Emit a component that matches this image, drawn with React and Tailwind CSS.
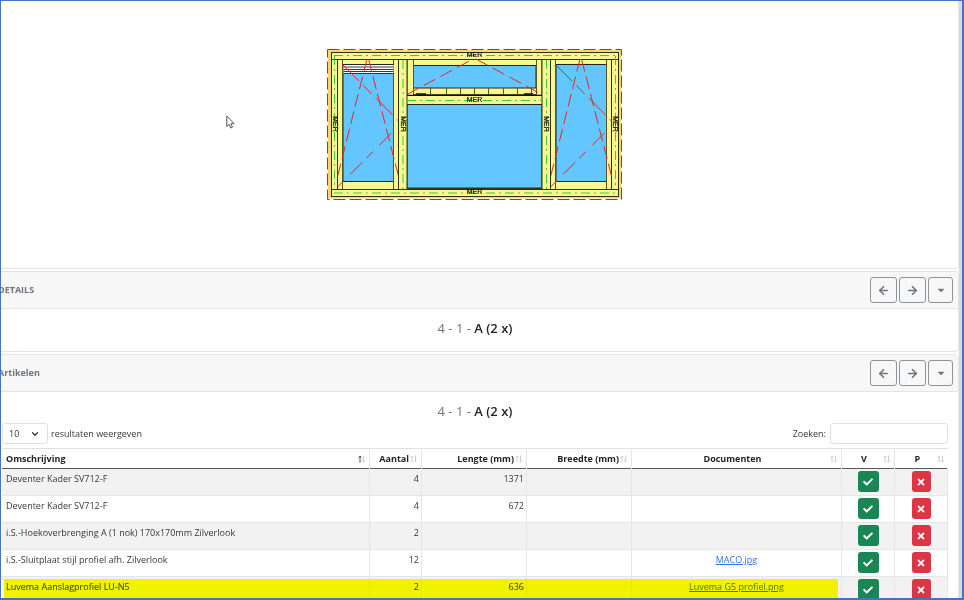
import React, { useState } from "react";
import { ArrowLeft, ArrowRight, ChevronDown } from "lucide-react";
import { FaCaretDown, FaCheck, FaTimes } from "react-icons/fa";

const articles = [
  { id: 1, name: "Deventer Kader SV712-F", count: 4, length: 1371 },
  { id: 2, name: "Deventer Kader SV712-F", count: 4, length: 672 },
  { id: 3, name: "i.S.-Hoekoverbrenging A (1 nok) 170x170mm Zilverlook", count: 2 },
  { id: 4, name: "i.S.-Sluitplaat stijl profiel afh. Zilverlook", count: 12, doc: "MACO.jpg" },
  { id: 5, name: "Luvema Aanslagprofiel LU-N5", count: 2, length: 636, doc: "Luvema G5 profiel.png", marked: true },
];

const columns = [
  { label: "Omschrijving", align: "text-left", sorted: true },
  { label: "Aantal", align: "text-right" },
  { label: "Lengte (mm)", align: "text-right" },
  { label: "Breedte (mm)", align: "text-right" },
  { label: "Documenten", align: "text-center" },
  { label: "V", align: "text-center" },
  { label: "P", align: "text-center" },
];

// Draai-kiep raam, x = linkerkant van het vleugelkader
const Sash = ({ x, louver }) => (
  <g>
    <rect x={x} y="59.5" width="61" height="130" fill="#f8f791" stroke="#33330f" />
    <rect x={x + 5.5} y="64.5" width="50.5" height="117" fill="#64c6ff" stroke="#222" />
    <path d={`M${x + 5} 60V189M${x + 56} 60V189`} stroke="#55552a" />
    {louver && (
      <>
        <rect x={x + 6} y="65" width="50" height="8.5" fill="#fff" />
        <path d={`M${x + 6} 64.5h50m-50 2.5h50m-50 2.5h50m-50 2h50m-50 2h50`} stroke="#222" strokeWidth="0.9" />
      </>
    )}
    <g stroke="#e2262c" strokeDasharray="13 5">
      <path d={`M${x + 29.5} 59L${x} 177`} />
      <path d={`M${x + 31} 59L${x + 61} 176`} />
      <path d={`M${x + 4.5} 64L${x + 61} 121`} strokeDasharray="24 6 12 6" />
      <path d={`M${x} 187L${x + 56} 131`} strokeDasharray="9 9 17 6" />
    </g>
  </g>
);

const WindowDrawing = () => (
  <svg width="297" height="152" viewBox="327 49 297 152" fill="none" role="img" aria-label="Kozijn">
    <rect x="328" y="50" width="293" height="148.5" fill="#ffd470" />
    <rect x="327.5" y="49.5" width="294" height="150" stroke="#4a46c8" strokeDasharray="12 4" />
    <rect x="331.5" y="52.5" width="287" height="144" fill="#f8f791" stroke="#33330f" />
    <path d="M331.5 59.5h287M331.5 189.5h287" stroke="#33330f" />

    <Sash x={337.5} louver />
    <Sash x={550.5} />

    {/* Middenvak */}
    <rect x="407" y="59.5" width="135" height="36" fill="#f8f791" stroke="#33330f" />
    <rect x="413.5" y="65.5" width="122.5" height="22.5" fill="#64c6ff" stroke="#222" />
    <path d="M413.5 60V95M536.5 60V95" stroke="#55552a" />
    <path d="M430.5 88v7M446.5 88v7M460.5 88v7M474.5 88v7M488.5 88v7M503.5 88v7M517.5 88v7M531.5 88v7M413.5 94.5h123" stroke="#55552a" />
    <path d="M416 94h10M524 94h9" stroke="#111" strokeWidth="1.6" />
    <path d="M407 95.5h135" stroke="#111" strokeWidth="1.5" />
    <rect x="407" y="96" width="135" height="8" fill="#f8f791" />
    <rect x="407" y="104.5" width="135" height="84" fill="#64c6ff" stroke="#222" />
    <path d="M407 188.5h135" stroke="#33330f" strokeWidth="2" />
    <path d="M407 94.5L473 59M476 59L542 94.5" stroke="#e2262c" strokeDasharray="13 6" />

    {/* Stijlen */}
    <rect x="398.5" y="59.5" width="8.5" height="130" fill="#f8f791" stroke="#33330f" />
    <rect x="542" y="59.5" width="8.5" height="130" fill="#f8f791" stroke="#33330f" />

    <g stroke="#35cf35" strokeDasharray="9 4 2 4">
      <path d="M334 55.5H616M407 100.5H541M334 193H616" />
      <path d="M334.5 56V189M403 60V189M546.5 60V189M615.5 56V189" />
    </g>

    <g fill="#111" stroke="#111" strokeWidth="0.2" fontFamily="Liberation Sans, Arial, sans-serif" fontSize="7" textAnchor="middle">
      <text x="474.5" y="57">MER</text>
      <text x="474.5" y="102">MER</text>
      <text x="474.5" y="194">MER</text>
      <text transform="translate(333 124) rotate(90)">MER</text>
      <text transform="translate(401 124) rotate(90)">MER</text>
      <text transform="translate(544 124) rotate(90)">MER</text>
      <text transform="translate(613 124) rotate(90)">MER</text>
    </g>
  </svg>
);

const SortArrows = ({ sorted }) => (
  <svg width="7" height="8" viewBox="0 0 7 8" fill="none" className="shrink-0" aria-hidden="true">
    <path d="M2 7.5V1M.5 2.5L2 1l1.500 1.500" stroke={sorted ? "#555" : "#cfcfcf"} />
    <path d="M5.500 .5V7M4 5.500L5.500 7 7 5.500" stroke="#cfcfcf" />
  </svg>
);

const navButton = "flex h-[26px] items-center justify-center rounded-[3px] border border-[#8d959c] text-[#6c757d] hover:bg-gray-200";

const CardHeader = ({ title }) => (
  <div className="flex items-center justify-between border-b border-[#e3e4e5] bg-[#f7f7f7] py-[5px] pr-[5px] pl-1.5">
    <h2 className="font-bold text-[#6c757d]">{title}</h2>
    <div className="flex gap-0.5">
      <button type="button" aria-label="Vorige" className={`${navButton} w-[27px]`}>
        <ArrowLeft size={13} strokeWidth={3} />
      </button>
      <button type="button" aria-label="Volgende" className={`${navButton} w-[27px]`}>
        <ArrowRight size={13} strokeWidth={3} />
      </button>
      <button type="button" aria-label="Menu" className={`${navButton} w-[25px]`}>
        <FaCaretDown size={10} />
      </button>
    </div>
  </div>
);

const CardTitle = () => (
  <p className="text-center text-[13px] leading-4 font-semibold text-[#212529]">
    <span className="font-medium text-[#6c757d]">4 - 1 - </span>A (2 x)
  </p>
);

const App = () => {
  const [pageSize, setPageSize] = useState("10");
  const [search, setSearch] = useState("");

  const visible = articles.filter((a) => a.name.toLowerCase().includes(search.toLowerCase()));

  return (
    <div className="h-screen overflow-hidden border border-r-2 border-b-2 border-[#4472c4] bg-white font-['Open_Sans','Noto_Sans',sans-serif] text-[9px] leading-4 text-[#33383c]">
      <div className="h-full overflow-hidden border-r-[3px] border-[#d8dadc]">
        <main className="-ml-2.5 flex flex-col gap-0.5">
          <section className="relative flex justify-center rounded-b border border-t-0 border-[#e3e4e5] pt-12 pb-[67px]">
            <WindowDrawing />
            {/* Muisaanwijzer */}
            <svg width="9" height="14" viewBox="0 0 9 14" className="absolute top-[114px] left-[234px]" aria-hidden="true">
              <path d="M.8 1v10.500l2.300-2.200 1.700 3.700 1.700-.8-1.600-3.500h3.300z" fill="#fff" stroke="#55565c" />
            </svg>
          </section>

          <section className="overflow-hidden rounded border border-[#e3e4e5]">
            <CardHeader title="DETAILS" />
            <div className="pt-[11px] pb-[15px]">
              <CardTitle />
            </div>
          </section>

          <section className="overflow-hidden rounded border border-[#e3e4e5]">
            <CardHeader title="Artikelen" />
            <div className="px-2.5 pt-[11px]">
              <CardTitle />
              <div className="mt-1 flex items-center justify-between">
                <label className="flex items-center gap-[3px]">
                  <span className="relative">
                    <select
                      value={pageSize}
                      onChange={(e) => setPageSize(e.target.value)}
                      className="block h-[21px] w-[46px] appearance-none rounded-[3px] border border-[#dee2e6] bg-white pl-1.5"
                    >
                      <option>10</option>
                      <option>25</option>
                      <option>50</option>
                    </select>
                    <ChevronDown size={10} strokeWidth={3} className="pointer-events-none absolute top-1.5 right-2" />
                  </span>
                  resultaten weergeven
                </label>
                <label className="flex items-center gap-1">
                  Zoeken:
                  <input
                    type="search"
                    value={search}
                    onChange={(e) => setSearch(e.target.value)}
                    className="h-[21px] w-[118px] rounded-[3px] border border-[#dee2e6] px-1.5"
                  />
                </label>
              </div>

              <table className="mt-1 w-full table-fixed border-collapse">
                <colgroup>
                  <col />
                  <col className="w-[52px]" />
                  <col className="w-[105px]" />
                  <col className="w-[105px]" />
                  <col className="w-[210px]" />
                  <col className="w-[53px]" />
                  <col className="w-[53px]" />
                </colgroup>
                <thead>
                  <tr className="h-5 border-t border-b border-t-[#dee2e6] border-b-[#55595c] text-[#212529]">
                    {columns.map((c) => (
                      <th key={c.label} className="border-x border-[#e4e7ea] px-1 font-bold first:border-l-0 last:border-r-0">
                        <div className="flex items-center gap-px">
                          <span className={`flex-1 whitespace-nowrap ${c.align}`}>{c.label}</span>
                          <SortArrows sorted={c.sorted} />
                        </div>
                      </th>
                    ))}
                  </tr>
                </thead>
                <tbody>
                  {visible.map((a) => (
                    <tr key={a.id} className="relative h-[27px] border-b border-[#e4e7ea] align-top odd:bg-[#f2f2f2]">
                      <td className="border-r border-[#e4e7ea] px-1 pt-0.5">
                        {a.name}
                        {a.marked && <div className="absolute top-0.5 right-[110px] -bottom-1 left-0.5 bg-[#ffff00] mix-blend-multiply" />}
                      </td>
                      <td className="border-r border-[#e4e7ea] px-0.5 pt-0.5 text-right">{a.count}</td>
                      <td className="border-r border-[#e4e7ea] px-0.5 pt-0.5 text-right">{a.length}</td>
                      <td className="border-r border-[#e4e7ea] px-0.5 pt-0.5 text-right">{a.width}</td>
                      <td className="border-r border-[#e4e7ea] px-0.5 pt-0.5 text-center">
                        {a.doc && (
                          <a href="#" className={`relative underline ${a.marked ? "text-[#3b7d12]" : "text-[#2f74f0]"}`}>
                            {a.doc}
                          </a>
                        )}
                      </td>
                      <td className="border-r border-[#e4e7ea] pt-0.5">
                        <button type="button" aria-label="Akkoord" className="mx-auto flex h-[21px] w-[21px] items-center justify-center rounded-[3px] bg-[#198754] text-white">
                          <FaCheck size={10} />
                        </button>
                      </td>
                      <td className="border-r border-[#e4e7ea] pt-0.5">
                        <button type="button" aria-label="Verwijderen" className="mx-auto flex h-[21px] w-[19px] items-center justify-center rounded-[3px] bg-[#dc3545] text-white">
                          <FaTimes size={10} />
                        </button>
                      </td>
                    </tr>
                  ))}
                </tbody>
              </table>
            </div>
          </section>
        </main>
      </div>
    </div>
  );
};

export default App;
